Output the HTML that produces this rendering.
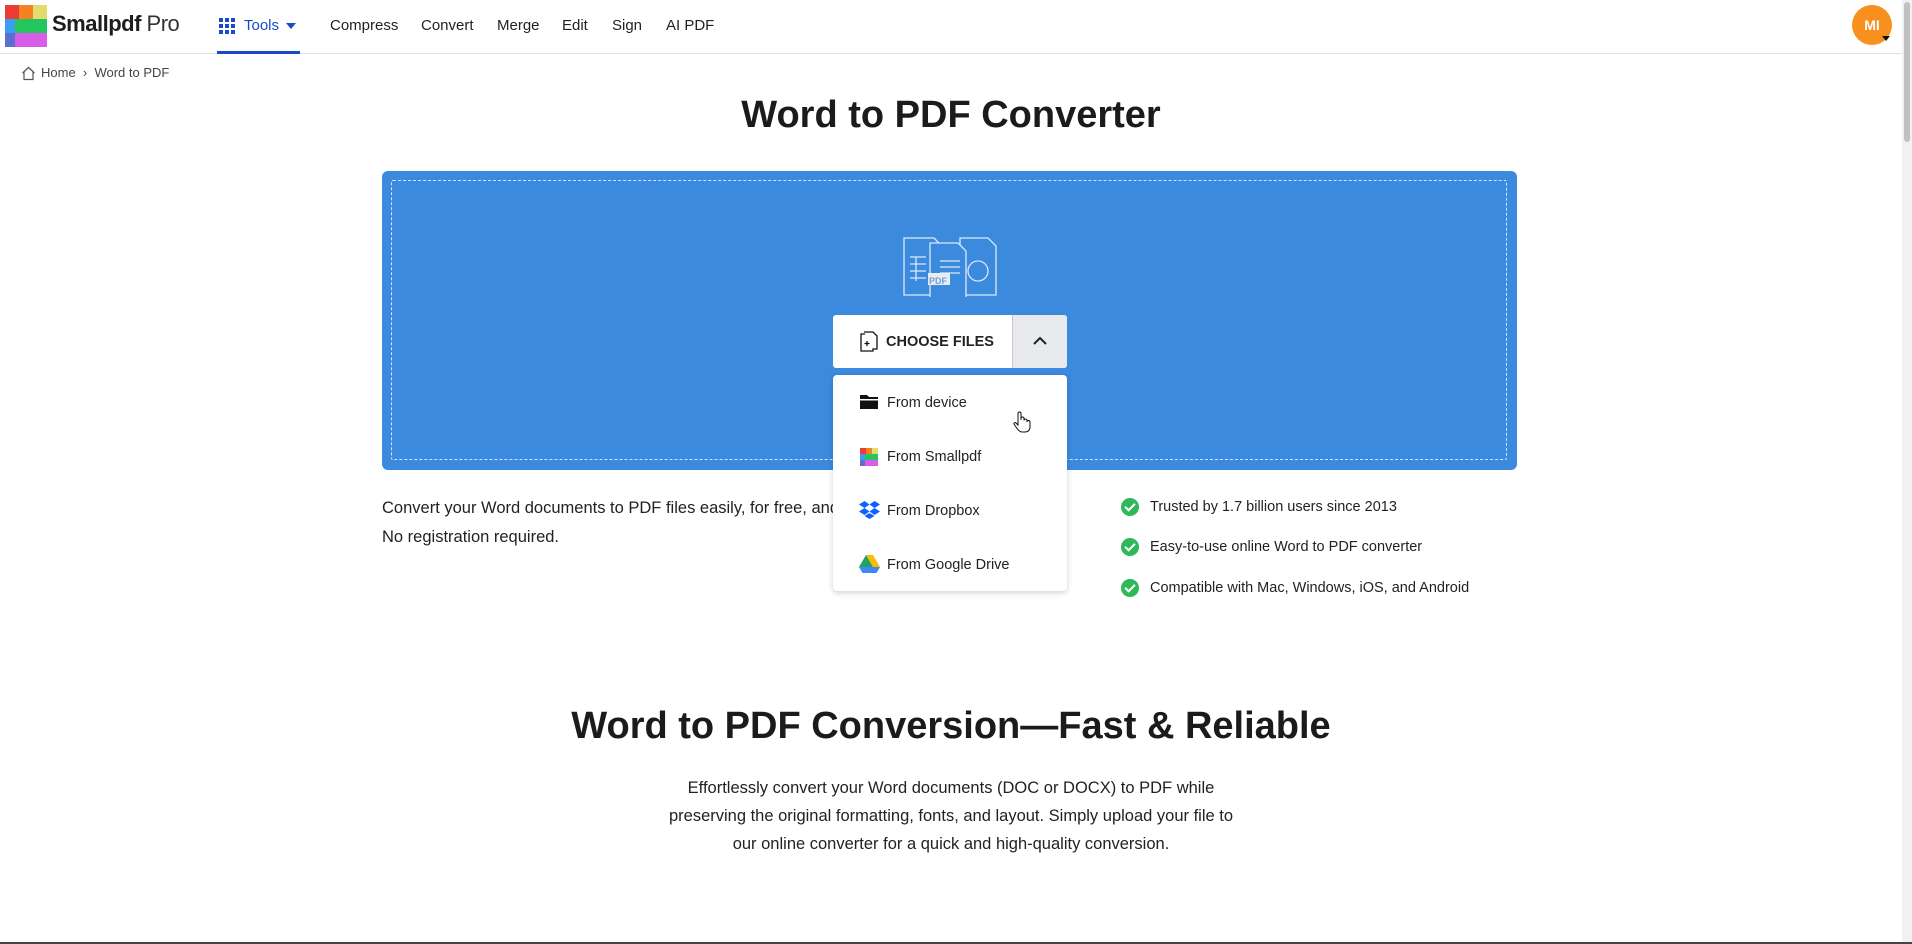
<!DOCTYPE html>
<html><head><meta charset="utf-8"><style>
*{box-sizing:border-box;margin:0;padding:0}
body{width:1912px;height:944px;overflow:hidden;background:#fff;font-family:"Liberation Sans",sans-serif;color:#1d1d1d;position:relative}
.a{position:absolute;white-space:nowrap}
.nav{font-size:15px;top:17px;color:#222}
.chk{position:absolute;left:1121px;width:18px;height:18px;border-radius:50%;background:#2fb85a}
.chk:after{content:"";position:absolute;left:6px;top:3px;width:4px;height:8px;border:solid #fff;border-width:0 2px 2px 0;transform:rotate(45deg)}
.ct{font-size:14.5px;left:1150px;color:#222}
.it{font-size:14.5px;left:887px;color:#222}
</style></head><body>
<div class="a" style="left:0;top:53px;width:1902px;height:1px;background:#e3e3e6"></div>
<svg class="a" style="left:5px;top:5px" width="42" height="42" viewBox="0 0 42 42">
<rect x="0" y="0" width="14" height="14" fill="#ee3a36"/><rect x="14" y="0" width="14" height="14" fill="#f58220"/><rect x="28" y="0" width="14" height="14" fill="#e1dc6b"/>
<rect x="0" y="14" width="10" height="14" fill="#3b9df0"/><rect x="10" y="14" width="32" height="14" fill="#23c55e"/>
<rect x="0" y="28" width="10" height="14" fill="#5b6fd2"/><rect x="10" y="28" width="32" height="14" fill="#d85de8"/></svg>
<div class="a" style="left:52px;top:11px;font-size:22px;font-weight:bold;letter-spacing:-0.5px">Smallpdf <span style="font-weight:normal;color:#333">Pro</span></div>
<svg class="a" style="left:219px;top:18px" width="16" height="16"><g fill="#1a49c9"><rect x="0" y="0" width="4" height="4"/><rect x="6" y="0" width="4" height="4"/><rect x="12" y="0" width="4" height="4"/><rect x="0" y="6" width="4" height="4"/><rect x="6" y="6" width="4" height="4"/><rect x="12" y="6" width="4" height="4"/><rect x="0" y="12" width="4" height="4"/><rect x="6" y="12" width="4" height="4"/><rect x="12" y="12" width="4" height="4"/></g></svg>
<div class="a nav" style="left:244px;color:#1a49c9">Tools</div>
<div class="a" style="left:286px;top:23px;border:5px solid transparent;border-top:6px solid #1a49c9"></div>
<div class="a" style="left:217px;top:51px;width:83px;height:3px;background:#1a49c9"></div>
<div class="a nav" style="left:330px">Compress</div>
<div class="a nav" style="left:421px">Convert</div>
<div class="a nav" style="left:497px">Merge</div>
<div class="a nav" style="left:562px">Edit</div>
<div class="a nav" style="left:612px">Sign</div>
<div class="a nav" style="left:666px">AI PDF</div>
<div class="a" style="left:1852px;top:5px;width:40px;height:40px;border-radius:50%;background:#f7901e;color:#fff;font-weight:bold;font-size:14px;text-align:center;line-height:40px">MI</div>
<div class="a" style="left:1882px;top:36px;border:4px solid transparent;border-top:5px solid #111"></div>
<div class="a" style="left:1902px;top:0;width:10px;height:944px;background:#f1f1f1"></div>
<div class="a" style="left:1904px;top:2px;width:6px;height:140px;background:#c1c1c1;border-radius:3px"></div>
<div class="a" style="left:0;top:942px;width:1912px;height:2px;background:#444"></div>
<svg class="a" style="left:21px;top:66px" width="15" height="15" viewBox="0 0 15 15"><path d="M1.5 7 L7.5 1.5 L13.5 7 M3 6 V13.5 H12 V6" fill="none" stroke="#555" stroke-width="1.2"/></svg>
<div class="a" style="left:41px;top:65px;font-size:13px;color:#444">Home &nbsp;›&nbsp; Word to PDF</div>
<div class="a" style="left:0;width:1902px;top:94px;text-align:center;font-size:38px;font-weight:bold;color:#1b1b1b">Word to PDF Converter</div>
<div class="a" style="left:382px;top:171px;width:1135px;height:299px;background:#3b8ade;border-radius:6px"></div>
<div class="a" style="left:391px;top:180px;width:1116px;height:280px;border:1px dashed #d6e6f8;border-radius:2px"></div>
<svg class="a" style="left:902px;top:237px" width="96" height="60" viewBox="0 0 96 60" fill="none" stroke="#dce9f8" stroke-width="1.3">
<path d="M2 1 H32 L38 7 V58 H2 Z" fill="#3b8ade"/><path d="M58 1 H86 L94 9 V58 H58 Z" fill="#3b8ade"/>
<path d="M8 20 H24 M8 27 H24 M8 34 H24 M8 41 H24 M14 20 V44" />
<circle cx="76" cy="34" r="10"/>
<path d="M28 6 H56 L64 14 V62 H28 Z" fill="#3b8ade"/>
<path d="M38 24 H58 M38 30 H58 M38 36 H58"/>
<rect x="26" y="36" width="22" height="12" fill="#e4eef9" stroke="none"/>
</svg>
<div class="a" style="left:929px;top:276px;font-size:9px;font-weight:bold;color:#7a9cc6">PDF</div>
<div class="a" style="left:833px;top:315px;width:234px;height:53px;background:#fff;border-radius:3px"></div>
<div class="a" style="left:1012px;top:315px;width:55px;height:53px;background:#e8e9ec;border-left:1px solid #c8c8cc;border-radius:0 3px 3px 0"></div>
<svg class="a" style="left:860px;top:331px" width="18" height="21" viewBox="0 0 18 21" fill="#fff" stroke="#111" stroke-width="1.3"><path d="M1 3 H10 L13 6 V20 H1 Z"/><path d="M4 1 H13 L17 5 V18 H13"/><path d="M7 10 V15 M4.5 12.5 H9.5"/></svg>
<div class="a" style="left:886px;top:334px;font-size:14.5px;font-weight:bold;color:#222">CHOOSE FILES</div>
<svg class="a" style="left:1033px;top:336px" width="14" height="10"><path d="M1 8 L7 2 L13 8" fill="none" stroke="#222" stroke-width="2"/></svg>
<div class="a" style="left:833px;top:375px;width:234px;height:216px;background:#fff;border-radius:4px;box-shadow:0 2px 6px rgba(0,0,0,.18)"></div>
<svg class="a" style="left:860px;top:395px" width="18" height="14"><path d="M0 0 H7 L9 2 H18 V14 H0 Z" fill="#111"/><rect x="0" y="4" width="18" height="1.5" fill="#fff"/></svg>
<div class="a it" style="top:395px">From device</div>
<svg class="a" style="left:860px;top:448px" width="18" height="18"><rect x="0" y="0" width="6" height="6" fill="#ee3a36"/><rect x="6" y="0" width="6" height="6" fill="#f58220"/><rect x="12" y="0" width="6" height="6" fill="#e1dc6b"/><rect x="0" y="6" width="5" height="6" fill="#3b9df0"/><rect x="5" y="6" width="13" height="6" fill="#23c55e"/><rect x="0" y="12" width="5" height="6" fill="#5b6fd2"/><rect x="5" y="12" width="13" height="6" fill="#d85de8"/></svg>
<div class="a it" style="top:449px">From Smallpdf</div>
<svg class="a" style="left:859px;top:501px" width="21" height="18" viewBox="0 0 21 18" fill="#0d62fe"><path d="M5.5 0 L0 3.5 L5.5 7 L10.5 3.5 Z M15.5 0 L10.5 3.5 L15.5 7 L21 3.5 Z M0 10.5 L5.5 14 L10.5 10.5 L5.5 7 Z M15.5 7 L10.5 10.5 L15.5 14 L21 10.5 Z M5.5 15 L10.5 18 L15.5 15 L10.5 12 Z"/></svg>
<div class="a it" style="top:503px">From Dropbox</div>
<svg class="a" style="left:859px;top:555px" width="21" height="18" viewBox="0 0 21 18"><path d="M7 0 H14 L21 12 H14 Z" fill="#fbbc04"/><path d="M7 0 L14 12 L10.5 18 L0 12 Z" fill="#1ea362"/><path d="M0 12 H21 L17.5 18 H3.5 Z" fill="#4285f4"/></svg>
<div class="a it" style="top:557px">From Google Drive</div>
<svg class="a" style="left:1013px;top:411px" width="18" height="22" viewBox="0 0 18 22"><path d="M5 11 V2.5 a1.5 1.5 0 0 1 3 0 V9 V7.5 a1.5 1.5 0 0 1 3 0 V9.5 a1.5 1.5 0 0 1 3 0 V11 a1.5 1.5 0 0 1 3 0 V16 C17 19 15 21 12 21 H9 C7 21 5 19 3 16 L1 13 C0.5 12 2 11 3 12 L5 14 Z" fill="#fff" stroke="#111" stroke-width="1"/></svg>
<div class="a" style="left:382px;top:494px;font-size:16.5px;line-height:29px;color:#222;z-index:-1">Convert your Word documents to PDF files easily, for free, and online.<br>No registration required.</div>
<div class="chk" style="top:498px"></div><div class="a ct" style="top:499px">Trusted by 1.7 billion users since 2013</div>
<div class="chk" style="top:538px"></div><div class="a ct" style="top:539px">Easy-to-use online Word to PDF converter</div>
<div class="chk" style="top:579px"></div><div class="a ct" style="top:580px">Compatible with Mac, Windows, iOS, and Android</div>
<div class="a" style="left:0;width:1902px;top:705px;text-align:center;font-size:38px;font-weight:bold;color:#1b1b1b">Word to PDF Conversion—Fast &amp; Reliable</div>
<div class="a" style="left:0;width:1902px;top:774px;text-align:center;font-size:16.5px;line-height:28px;color:#222">Effortlessly convert your Word documents (DOC or DOCX) to PDF while<br>preserving the original formatting, fonts, and layout. Simply upload your file to<br>our online converter for a quick and high-quality conversion.</div>
</body></html>
